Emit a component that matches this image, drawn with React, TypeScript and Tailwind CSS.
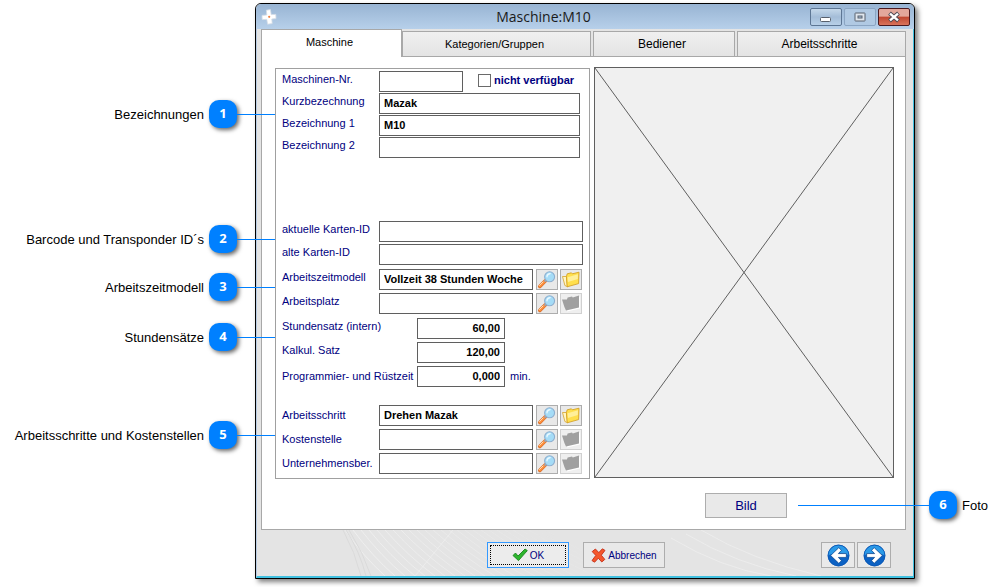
import React, { useState } from 'react';

type Option = 'linked' | 'empty';

interface CalloutProps {
  number: number;
  text: string;
  className?: string;
}

interface FieldProps {
  id: string;
  label: string;
  value?: string;
  raised?: boolean;
}

const tabs = [
  { id: 'groups', label: 'Kategorien/Gruppen', className: 'text-[11px]' },
  { id: 'operators', label: 'Bediener', className: 'text-xs' },
  { id: 'steps', label: 'Arbeitsschritte', className: 'text-xs' },
];

const inputStyle =
  'h-[21px] border border-[#5f5f5f] bg-white px-1 pb-0.5 text-[11px] font-bold text-black outline-none';

function Badge({ number }: { number: number }) {
  return (
    <span className="flex h-7 w-7 shrink-0 items-center justify-center rounded-[10px] bg-[#0080ff] font-['Open_Sans',sans-serif] text-[13px] font-bold text-white shadow-[2px_2px_4px_rgba(0,0,0,0.6)]">
      {number}
    </span>
  );
}

function Callout({ number, text, className = '' }: CalloutProps) {
  return (
    <div className={`relative flex h-7 items-center justify-end gap-[5px] ${className}`}>
      <span className="whitespace-nowrap pt-0.5 text-[13px]">{text}</span>
      <Badge number={number} />
      <span className="absolute left-full top-1/2 h-px w-[38px] bg-[#0080ff]" />
    </div>
  );
}

function SearchIcon() {
  return (
    <svg viewBox="0 0 20 19" className="h-[19px] w-5">
      <path d="M2.8 16.4 8.4 10.8" stroke="#d9702c" strokeWidth="3.6" strokeLinecap="round" />
      <path d="M2.9 16.1 8.2 10.8" stroke="#ff8f3c" strokeWidth="2.4" strokeLinecap="round" />
      <path d="M2.6 15.4 6 12" stroke="#ffdcb0" strokeWidth="1" strokeLinecap="round" />
      <path d="m7.6 11.6 2-2" stroke="#98a3b3" strokeWidth="2" />
      <circle cx="12.6" cy="6.8" r="5" fill="#a5dcf7" stroke="#8fb0d0" strokeWidth="1.1" />
      <path d="M9.3 6.2a3.4 3.4 0 0 1 4-3.1c1 .2.5 1.2-.6 1.5-1.6.4-1.8 1.6-2.2 2.6-.4.8-1.2.1-1.2-1Z" fill="#e9f8ff" />
    </svg>
  );
}

function FolderIcon({ disabled }: { disabled: boolean }) {
  if (disabled) {
    return (
      <svg viewBox="0 0 20 19" className="h-[19px] w-5">
        <path d="M2 6.5h5l.6-2 4.4-1 .8 1L19 2.5v12L6 17.5 4.4 14Z" fill="#fff" />
        <path d="M1 5.5h5l.6-2 4.4-1 .8 1L18 1.5v12L5 16.5 3.4 13Z" fill="#a0a0a0" />
      </svg>
    );
  }
  return (
    <svg viewBox="0 0 20 19" className="h-[19px] w-5">
      <path d="M1.5 6.5h4l1 10.2-2.6-1.2Z" fill="#fff6c4" stroke="#d6a32a" strokeWidth=".8" />
      <path d="m5.4 6.6.8-2.8 4.2-1 .9 1L18 2.2l-.4 11.4-11.4 3.2Z" fill="#ffdf4d" stroke="#d09a1c" strokeWidth=".8" />
      <path d="m6.6 7.2 10.4-3-.2 4.8-9.8 3Z" fill="#ffef9a" />
    </svg>
  );
}

function Label({ id, text, raised, wide }: { id: string; text: string; raised?: boolean; wide?: boolean }) {
  return (
    <label
      htmlFor={id}
      className={`shrink-0 whitespace-nowrap text-[11px] leading-3 ${wide ? 'w-[135px]' : 'w-[97px]'} ${
        raised ? 'pb-1.5' : 'pb-px'
      }`}
    >
      {text}
    </label>
  );
}

function TextField({ id, label, value = '', raised }: FieldProps) {
  return (
    <div className="flex items-center">
      <Label id={id} text={label} raised={raised} />
      <input id={id} type="text" defaultValue={value} className={`min-w-0 flex-1 ${inputStyle}`} />
    </div>
  );
}

function LookupField({ id, label, value = '', raised, option }: FieldProps & { option: Option }) {
  return (
    <div className="flex items-center">
      <Label id={id} text={label} raised={raised} />
      <input id={id} type="text" defaultValue={value} className={`min-w-0 flex-1 ${inputStyle}`} />
      <button
        type="button"
        aria-label={`${label} suchen`}
        className="ml-[3px] flex h-[21px] w-[22px] items-center justify-center border border-[#adadad] bg-[#e9e9e9]"
      >
        <SearchIcon />
      </button>
      <button
        type="button"
        aria-label={`${label} öffnen`}
        disabled={option === 'empty'}
        className="ml-0.5 flex h-[21px] w-[22px] items-center justify-center border border-[#adadad] bg-[#e9e9e9] disabled:border-[#d0d0d0] disabled:bg-[#efefef]"
      >
        <FolderIcon disabled={option === 'empty'} />
      </button>
    </div>
  );
}

function RateField({ id, label, value, raised, unit }: FieldProps & { unit?: string }) {
  return (
    <div className="flex items-center">
      <Label id={id} text={label} raised={raised} wide />
      <input id={id} type="text" defaultValue={value} className={`w-[88px] text-right ${inputStyle}`} />
      {unit && <span className="pl-[5px] text-[11px]">{unit}</span>}
    </div>
  );
}

function TitleBar() {
  return (
    <header className="flex h-[25px] items-center rounded-t-[5px] bg-linear-to-b from-[#98b4d3] to-[#b7d0ea] pr-1 pl-[5px]">
      <svg viewBox="0 0 16 16" className="h-4 w-4">
        <path d="m5.4 1.2 4-.6.8 5 4.6-.2.2 4.2-4.2.4.4 4.6-4.6.6-.8-4.8-4.6.2L1 6.4l4.8-.4Z" fill="#fff" stroke="#d5dde6" strokeWidth=".8" />
        <circle cx="8.2" cy="7.8" r="1.1" fill="#f08040" />
      </svg>
      <h1 className="flex-1 text-center font-['Open_Sans',sans-serif] text-sm text-[#1a1a1a]">Maschine:M10</h1>
      <div className="flex gap-0.5">
        <button
          type="button"
          aria-label="Minimieren"
          className="flex h-[18px] w-8 items-center justify-center rounded-xs border border-[#5d7694] bg-linear-to-b from-[#c5d8ea] via-[#a4bdd8] to-[#b8d0e8]"
        >
          <svg viewBox="0 0 12 12" className="h-3 w-3">
            <rect x=".5" y="6.5" width="10" height="4" rx="1" fill="#fff" stroke="#58606c" />
          </svg>
        </button>
        <button
          type="button"
          aria-label="Maximieren"
          className="flex h-[18px] w-8 items-center justify-center rounded-xs border border-[#8ba5c3] bg-[#b0c9e3]"
        >
          <svg viewBox="0 0 12 12" className="h-3 w-3">
            <rect x="1" y="2" width="10" height="8" rx=".5" fill="#dfe6ee" stroke="#59616d" />
            <rect x="4" y="5" width="4" height="2" fill="#a8c2de" stroke="#59616d" />
          </svg>
        </button>
        <button
          type="button"
          aria-label="Schließen"
          className="flex h-[18px] w-8 items-center justify-center rounded-xs border border-[#4b1a20] bg-linear-to-b from-[#e3a79b] from-45% via-[#bf4630] via-50% to-[#d9735b]"
        >
          <svg viewBox="0 0 12 12" className="h-3 w-3">
            <path d="m1.5 2.2 9 7.6m0-7.6-9 7.6" stroke="#4d4a55" strokeWidth="4.2" />
            <path d="m2 2.6 8 6.8m0-6.8L2 9.4" stroke="#fff" strokeWidth="2.4" />
          </svg>
        </button>
      </div>
    </header>
  );
}

function MachineForm() {
  const [unavailable, setUnavailable] = useState(false);

  return (
    <div className="mt-px w-[315px] shrink-0 border border-[#a0a0a0] pt-0.5 pb-1 pl-1.5 text-[#000080]">
      <div className="flex w-[298px] flex-col gap-px">
        <div className="flex items-center">
          <Label id="number" text="Maschinen-Nr." raised />
          <input id="number" type="text" className={`w-[84px] ${inputStyle}`} />
          <label className="ml-[15px] flex items-center gap-[3px] whitespace-nowrap pb-0.5 text-[11px] font-bold">
            <input
              type="checkbox"
              checked={unavailable}
              onChange={(e) => setUnavailable(e.target.checked)}
              className="h-[13px] w-[13px] appearance-none border border-[#6a6a6a] bg-white checked:bg-[#000080]"
            />
            nicht verfügbar
          </label>
        </div>
        <TextField id="short" label="Kurzbezechnung" value="Mazak" raised />
        <TextField id="name1" label="Bezeichnung 1" value="M10" raised />
        <TextField id="name2" label="Bezeichnung 2" raised />
      </div>

      <div className="mt-[63px] flex w-[301px] flex-col gap-0.5">
        <TextField id="card" label="aktuelle Karten-ID" raised />
        <TextField id="oldCard" label="alte Karten-ID" raised />
      </div>

      <div className="mt-1 flex w-[300px] flex-col gap-[3px]">
        <LookupField id="model" label="Arbeitszeitmodell" value="Vollzeit 38 Stunden Woche" option="linked" raised />
        <LookupField id="place" label="Arbeitsplatz" option="empty" raised />
      </div>

      <div className="mt-1 flex flex-col gap-[3px]">
        <RateField id="rate" label="Stundensatz (intern)" value="60,00" raised />
        <RateField id="calcRate" label="Kalkul. Satz" value="120,00" raised />
        <RateField id="setup" label="Programmier- und Rüstzeit" value="0,000" unit="min." />
      </div>

      <div className="mt-[18px] flex w-[300px] flex-col gap-[3px]">
        <LookupField id="step" label="Arbeitsschritt" value="Drehen Mazak" option="linked" />
        <LookupField id="costCenter" label="Kostenstelle" option="empty" />
        <LookupField id="division" label="Unternehmensber." option="empty" />
      </div>
    </div>
  );
}

function FooterPattern() {
  const lines = Array.from({ length: 26 }, (_, i) => i);
  return (
    <svg aria-hidden="true" viewBox="0 0 650 46" preserveAspectRatio="xMinYMin slice" className="absolute inset-0 h-full w-full">
      <g fill="none" stroke="#f0f0f0">
        {lines.map((i) => (
          <path key={i} d={`M${84 + i * 8} 0Q${102 + i * 9} 26 ${124 + i * 10} 46`} strokeOpacity={0.9 - i * 0.033} />
        ))}
        <path d="M154 46 192 0M440 0q50 30 120 46M425 4q50 30 110 42M410 8q50 30 100 38" strokeOpacity=".7" />
      </g>
      <path d="M82 0q12 22 18 46M85 0q14 22 20 46M88 0q14 22 22 46" fill="none" stroke="#dadada" />
    </svg>
  );
}

function ArrowIcon({ direction }: { direction: 'left' | 'right' }) {
  return (
    <svg viewBox="0 0 24 24" className={`h-[23px] w-[23px] ${direction === 'right' ? '-scale-x-100' : ''}`}>
      <circle cx="12" cy="12" r="11.2" fill="#0c62c4" />
      <path d="M1.2 12a10.8 10.8 0 0 1 21.6 0c-6-4-14-4-21.6 0Z" fill="#2b9ae8" />
      <circle cx="12" cy="12" r="10.9" fill="none" stroke="#0a55b0" strokeWidth=".8" />
      <path d="M12.3 3.8 3.8 12l8.5 8.2 2.8-2.8-3.2-3.4h8.3v-4h-8.3l3.2-3.4Z" fill="#fff" stroke="#0b4690" strokeWidth=".8" />
    </svg>
  );
}

function Footer() {
  return (
    <footer className="relative pt-3 pb-2">
      <FooterPattern />
      <div className="relative flex items-center pr-[15px] text-[10px] text-[#000080]">
        <div className="flex-1" />
        <div className="flex gap-3.5">
          <button type="button" className="h-[26px] w-[82px] border border-[#3399ff] bg-[#ececec] p-0.5">
            <span className="flex h-full items-center justify-center gap-0.5 border border-dotted border-black">
              <svg viewBox="0 0 16 14" className="h-3.5 w-4">
                <path d="M1 7.5 3.5 5 6 8 13 1l2.3 1.6L6.5 12.6Z" fill="#2db52d" stroke="#16851b" strokeWidth=".9" strokeLinejoin="round" />
              </svg>
              OK
            </span>
          </button>
          <button
            type="button"
            className="flex h-[26px] w-[82px] items-center justify-center gap-0.5 border border-[#adadad] bg-[#e9e9e9]"
          >
            <svg viewBox="0 0 15 15" className="h-[15px] w-[15px]">
              <path
                d="M1.2 3.6 4.4 1l3.4 3.6L11.4.8l2.6 1.6-3.7 4.8 3.5 4.2-3 2.6-3.5-3.8-3.7 4-2.6-1.6 3.8-5.2Z"
                fill="#f4572c"
                stroke="#c4301a"
                strokeWidth=".9"
                strokeLinejoin="round"
              />
            </svg>
            Abbrechen
          </button>
        </div>
        <div className="flex flex-1 justify-end gap-0.5">
          <button type="button" aria-label="Zurück" className="flex h-[26px] w-[34px] items-center justify-center border border-[#adadad] bg-[#eaeaea]">
            <ArrowIcon direction="left" />
          </button>
          <button type="button" aria-label="Weiter" className="flex h-[26px] w-[34px] items-center justify-center border border-[#adadad] bg-[#eaeaea]">
            <ArrowIcon direction="right" />
          </button>
        </div>
      </div>
    </footer>
  );
}

function MachineWindow() {
  const [active, setActive] = useState('machine');

  return (
    <section className="mt-[3px] min-w-0 flex-1 rounded-t-md border border-black bg-[#e4e4e4] shadow-[3px_3px_5px_rgba(0,0,0,0.5)]">
      <TitleBar />
      <div className="border-r border-b-2 border-l border-r-[#40c0e0] border-b-[#40c0e0] border-l-[#b8cce4] pr-[7px] pl-1">
        <div role="tablist" className="grid grid-cols-[141fr_504fr]">
          <button
            type="button"
            role="tab"
            aria-selected={active === 'machine'}
            onClick={() => setActive('machine')}
            className="h-7 border-x border-t border-[#a8a8a8] bg-white pr-1 pb-0.5 text-[11px]"
          >
            Maschine
          </button>
          <div className="grid grid-cols-[189fr_142fr_169fr] gap-0.5 border-b border-[#a8a8a8] pt-0.5">
            {tabs.map((tab) => (
              <button
                key={tab.id}
                type="button"
                role="tab"
                aria-selected={active === tab.id}
                onClick={() => setActive(tab.id)}
                className={`border-x border-t border-[#a8a8a8] bg-linear-to-b from-[#f0f0f0] to-[#e4e4e4] pr-1 ${tab.className}`}
              >
                {tab.label}
              </button>
            ))}
          </div>
        </div>

        <div role="tabpanel" className="border-x border-b border-[#a8a8a8] bg-white pt-2.5 pr-[11px] pb-[11px] pl-[13px]">
          <div className="flex gap-1">
            <MachineForm />
            <div className="mb-px min-w-0 flex-1 border border-[#5f5f5f] bg-[#f0f0f0]">
              <svg viewBox="0 0 100 100" preserveAspectRatio="none" className="block h-0 min-h-full w-full">
                <path d="m0 0 100 100M100 0 0 100" stroke="#5f5f5f" vectorEffect="non-scaling-stroke" />
              </svg>
            </div>
          </div>
          <div className="mt-3.5 flex justify-center pl-[323px]">
            <button type="button" className="h-[25px] w-[82px] border border-[#adadad] bg-[#e9e9e9] text-[13px] text-[#000080]">
              Bild
            </button>
          </div>
        </div>

        <Footer />
      </div>
    </section>
  );
}

export default function App() {
  return (
    <main className="flex items-start bg-white pb-2 font-['Liberation_Sans',Arial,sans-serif] text-black">
      <aside className="relative z-10 mr-[18px] w-[237px] shrink-0 pt-[100px]">
        <Callout number={1} text="Bezeichnungen" />
        <Callout number={2} text="Barcode und Transponder ID´s" className="mt-[97px]" />
        <Callout number={3} text="Arbeitszeitmodell" className="mt-5" />
        <Callout number={4} text="Stundensätze" className="mt-[22px]" />
        <Callout number={5} text="Arbeitsschritte und Kostenstellen" className="mt-[70px]" />
      </aside>

      <MachineWindow />

      <aside className="relative z-10 w-[89px] shrink-0 pt-[491px] pl-3.5">
        <div className="relative flex h-7 items-center gap-[5px]">
          <span className="absolute right-full top-1/2 h-px w-[131px] bg-[#0080ff]" />
          <Badge number={6} />
          <span className="pt-0.5 text-[13px]">Foto</span>
        </div>
      </aside>
    </main>
  );
}
